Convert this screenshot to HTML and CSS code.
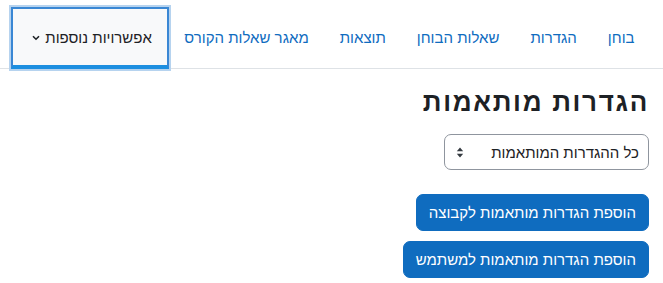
FILE: index.html
```html
<!DOCTYPE html>
<html lang="he" dir="rtl">
<head>
<meta charset="utf-8">
<link rel="stylesheet" href="styles.css">
</head>
<body>
<div class="page">
  <nav class="secnav">
    <ul class="tabs">
      <li><a class="tab" href="#">בוחן</a></li>
      <li><a class="tab" href="#">הגדרות</a></li>
      <li><a class="tab" href="#">שאלות הבוחן</a></li>
      <li><a class="tab" href="#">תוצאות</a></li>
      <li><a class="tab" href="#">מאגר שאלות הקורס</a></li>
      <li><a class="tab more" href="#">אפשרויות נוספות<svg class="chev" width="8" height="6" viewBox="0 0 8 6"><path d="M1 1.2 L4 4.2 L7 1.2" fill="none" stroke="#1d2125" stroke-width="1.6"/></svg></a></li>
    </ul>
  </nav>
  <main class="content">
    <h2 class="title">הגדרות מותאמות</h2>
    <div class="selectbox">
      <span class="seltext">כל ההגדרות המותאמות</span>
      <svg class="arrows" width="8" height="11" viewBox="0 0 8 11"><path d="M4 0.5 L7.2 4.3 L0.8 4.3 Z M4 10.5 L7.2 6.7 L0.8 6.7 Z" fill="#343a40"/></svg>
    </div>
    <div class="actions">
      <button class="btn">הוספת הגדרות מותאמות לקבוצה</button>
      <button class="btn">הוספת הגדרות מותאמות למשתמש</button>
    </div>
  </main>
</div>
</body>
</html>
```

FILE: styles.css
```css
* { box-sizing: border-box; }
html, body { margin: 0; padding: 0; background: #fff; }
body {
  font-family: "Liberation Sans", "DejaVu Sans", sans-serif;
  font-size: 15px;
  color: #1d2125;
  direction: rtl;
}
.page { padding: 8px 0 0 0; }
.secnav { border-bottom: 1px solid #dee2e6; padding: 0 13px; }
.tabs {
  list-style: none;
  margin: 0;
  padding: 0;
  display: flex;
  flex-direction: row;
}
.tab {
  display: flex;
  align-items: center;
  height: 60px;
  padding: 0 15.5px 2px 15.5px;
  color: #0f6cbf;
  text-decoration: none;
  white-space: nowrap;
}
.tab.more {
  color: #1d2125;
  background: #f8f9fa;
  border: 2px solid #3a87d4;
  border-bottom: 4px solid #1d8fe0;
  box-shadow: 0 0 0 2px #b6d3ef;
  gap: 5px;
  padding: 0 15px 0 19px;
  margin-bottom: -1px;
  height: 62px;
  margin-top: -1px;
}
.chev { display: block; margin-top: 1px; }
.content { padding: 18px 14px 0 14px; }
.title {
  margin: 0 0 16px 0;
  font-size: 26px;
  font-weight: 700;
  letter-spacing: 1.7px;
  line-height: 1.2;
  color: #1d2125;
}
.selectbox {
  width: 205px;
  height: 36px;
  border: 1px solid #8f959e;
  border-radius: 7px;
  display: flex;
  align-items: center;
  justify-content: space-between;
  padding: 0 9px 0 11px;
  margin-bottom: 24px;
}
.seltext { white-space: nowrap; }
.arrows { display: block; }
.actions {
  display: flex;
  flex-direction: column;
  align-items: flex-start;
  gap: 10px;
}
.btn {
  font: inherit;
  color: #fff;
  background: #0f6cbf;
  border: 1px solid #0f6cbf;
  border-radius: 7px;
  height: 37px;
  padding: 0 12px;
  white-space: nowrap;
}
```
